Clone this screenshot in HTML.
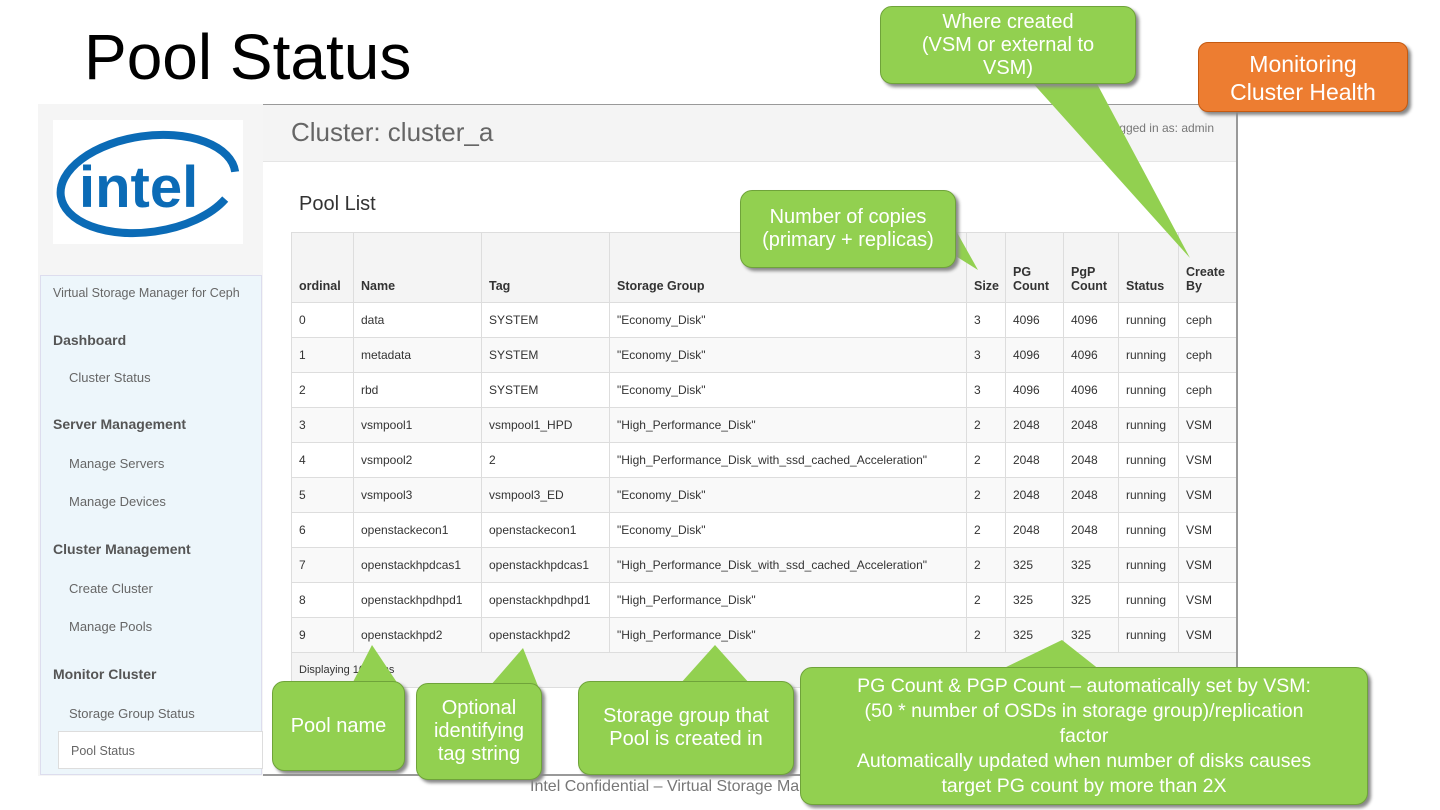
<!DOCTYPE html>
<html><head><meta charset="utf-8"><style>
*{margin:0;padding:0;box-sizing:border-box}
body{width:1440px;height:810px;background:#fff;position:relative;overflow:hidden;font-family:"Liberation Sans",sans-serif}
.abs{position:absolute}
.title{left:84px;top:20px;font-size:64px;color:#000}
.frame{left:38px;top:104px;width:1200px;height:672px;border-top:2px solid #999;border-right:2px solid #999;border-left:1px solid #bbb;border-bottom:2px solid #999;background:#fff}
.side{left:38px;top:104px;width:225px;height:672px;background:#f5f5f5}
.nav{left:40px;top:275px;width:222px;height:500px;background:#edf6fb;border:1px solid #dde}
.nav div{position:absolute;left:12px;font-size:13px;color:#666}
.nav .h{font-weight:bold;font-size:14px;color:#555}
.hdr{left:263px;top:105px;width:973px;height:57px;background:#f4f4f4;border-bottom:1px solid #e5e5e5}
.tw{position:absolute;left:291px;top:232px;width:945px;overflow:hidden}
table{border-collapse:collapse;font-size:12px;color:#333;table-layout:fixed;width:947px}
td,th{border:1px solid #ddd;padding:0 7px;text-align:left;height:35px;white-space:nowrap;overflow:hidden}
th{height:70px;vertical-align:bottom;padding-bottom:9px;background:#f4f4f4;font-size:12.5px}
tr:nth-child(odd) td{background:#f9f9f9}
.g{position:absolute;background:#92d050;border:1.5px solid #6fa33a;border-radius:12px;color:#fff;text-align:center;font-size:20px;line-height:23px;box-shadow:3px 3px 3px #888;display:flex;align-items:center;justify-content:center}
</style></head><body>
<div class="abs title">Pool Status</div>
<div class="abs frame"></div>
<div class="abs side"></div>
<svg class="abs" style="left:53px;top:120px" width="190" height="124"><rect width="190" height="124" fill="#fff"/>
<ellipse cx="95" cy="64" rx="88" ry="48" fill="none" stroke="#0b6bb6" stroke-width="8" transform="rotate(-8 95 64)" stroke-dasharray="420 60" stroke-dashoffset="-30"/>
<text x="26" y="87" font-size="58" font-weight="bold" fill="#0b6bb6" font-family="Liberation Sans">intel</text></svg>
<div class="abs nav">
<div style="top:10px;font-size:12.5px">Virtual Storage Manager for Ceph</div>
<div class="h" style="top:56px">Dashboard</div>
<div style="top:94px;left:28px">Cluster Status</div>
<div class="h" style="top:140px">Server Management</div>
<div style="top:180px;left:28px">Manage Servers</div>
<div style="top:218px;left:28px">Manage Devices</div>
<div class="h" style="top:265px">Cluster Management</div>
<div style="top:305px;left:28px">Create Cluster</div>
<div style="top:343px;left:28px">Manage Pools</div>
<div class="h" style="top:390px">Monitor Cluster</div>
<div style="top:430px;left:28px">Storage Group Status</div>
<div style="top:455px;left:17px;width:205px;height:38px;background:#fff;border:1px solid #ddd;padding:12px;font-size:12.5px">Pool Status</div>
</div>
<div class="abs hdr"><div style="position:absolute;left:28px;top:12px;font-size:26px;color:#666">Cluster: cluster_a</div><div style="position:absolute;right:22px;top:16px;font-size:12px;color:#777">Logged in as: admin</div></div>
<div class="abs" style="left:299px;top:193px;font-size:20px;color:#333">Pool List</div>
<div class="tw"><table>
<colgroup><col style="width:62px"><col style="width:128px"><col style="width:128px"><col style="width:357px"><col style="width:39px"><col style="width:58px"><col style="width:55px"><col style="width:60px"><col style="width:60px"></colgroup>
<tr><th>ordinal</th><th>Name</th><th>Tag</th><th>Storage Group</th><th>Size</th><th>PG<br>Count</th><th>PgP<br>Count</th><th>Status</th><th>Create<br>By</th></tr>
<tr><td>0</td><td>data</td><td>SYSTEM</td><td>"Economy_Disk"</td><td>3</td><td>4096</td><td>4096</td><td>running</td><td>ceph</td></tr>
<tr><td>1</td><td>metadata</td><td>SYSTEM</td><td>"Economy_Disk"</td><td>3</td><td>4096</td><td>4096</td><td>running</td><td>ceph</td></tr>
<tr><td>2</td><td>rbd</td><td>SYSTEM</td><td>"Economy_Disk"</td><td>3</td><td>4096</td><td>4096</td><td>running</td><td>ceph</td></tr>
<tr><td>3</td><td>vsmpool1</td><td>vsmpool1_HPD</td><td>"High_Performance_Disk"</td><td>2</td><td>2048</td><td>2048</td><td>running</td><td>VSM</td></tr>
<tr><td>4</td><td>vsmpool2</td><td>2</td><td>"High_Performance_Disk_with_ssd_cached_Acceleration"</td><td>2</td><td>2048</td><td>2048</td><td>running</td><td>VSM</td></tr>
<tr><td>5</td><td>vsmpool3</td><td>vsmpool3_ED</td><td>"Economy_Disk"</td><td>2</td><td>2048</td><td>2048</td><td>running</td><td>VSM</td></tr>
<tr><td>6</td><td>openstackecon1</td><td>openstackecon1</td><td>"Economy_Disk"</td><td>2</td><td>2048</td><td>2048</td><td>running</td><td>VSM</td></tr>
<tr><td>7</td><td>openstackhpdcas1</td><td>openstackhpdcas1</td><td>"High_Performance_Disk_with_ssd_cached_Acceleration"</td><td>2</td><td>325</td><td>325</td><td>running</td><td>VSM</td></tr>
<tr><td>8</td><td>openstackhpdhpd1</td><td>openstackhpdhpd1</td><td>"High_Performance_Disk"</td><td>2</td><td>325</td><td>325</td><td>running</td><td>VSM</td></tr>
<tr><td>9</td><td>openstackhpd2</td><td>openstackhpd2</td><td>"High_Performance_Disk"</td><td>2</td><td>325</td><td>325</td><td>running</td><td>VSM</td></tr>
<tr><td colspan="9" style="background:#f4f4f4;font-size:11px">Displaying 10 items</td></tr>
</table></div>
<div class="abs" style="left:530px;top:778px;font-size:16px;color:#777">Intel Confidential – Virtual Storage Manager</div>
<svg class="abs" style="left:0;top:0" width="1440" height="810">
<g fill="#92d050">
<polygon points="1030,80 1095,80 1190,258"/>
<polygon points="930,240 950,220 978,270"/>
<polygon points="352,684 398,684 372,645"/>
<polygon points="490,686 538,686 523,648"/>
<polygon points="680,684 750,684 715,645"/>
<polygon points="1000,670 1100,670 1062,640"/>
</g></svg>
<div class="g" style="left:880px;top:6px;width:256px;height:78px">Where created<br>(VSM or external to<br>VSM)</div>
<div class="g" style="left:740px;top:190px;width:216px;height:78px">Number of copies<br>(primary + replicas)</div>
<div class="g" style="left:272px;top:681px;width:133px;height:90px">Pool name</div>
<div class="g" style="left:416px;top:683px;width:126px;height:97px">Optional<br>identifying<br>tag string</div>
<div class="g" style="left:578px;top:681px;width:216px;height:94px">Storage group that<br>Pool is created in</div>
<div class="g" style="left:800px;top:667px;width:568px;height:138px;font-size:19.5px;line-height:25px">PG Count &amp; PGP Count – automatically set by VSM:<br>(50 * number of OSDs in storage group)/replication<br>factor<br>Automatically updated when number of disks causes<br>target PG count by more than 2X</div>
<div class="abs" style="left:1198px;top:42px;width:210px;height:70px;background:#ed7d31;border:1.5px solid #c55a11;border-radius:10px;color:#fff;font-size:23px;line-height:28px;text-align:center;padding-top:7px;box-shadow:3px 3px 3px #888">Monitoring<br>Cluster Health</div>
</body></html>
